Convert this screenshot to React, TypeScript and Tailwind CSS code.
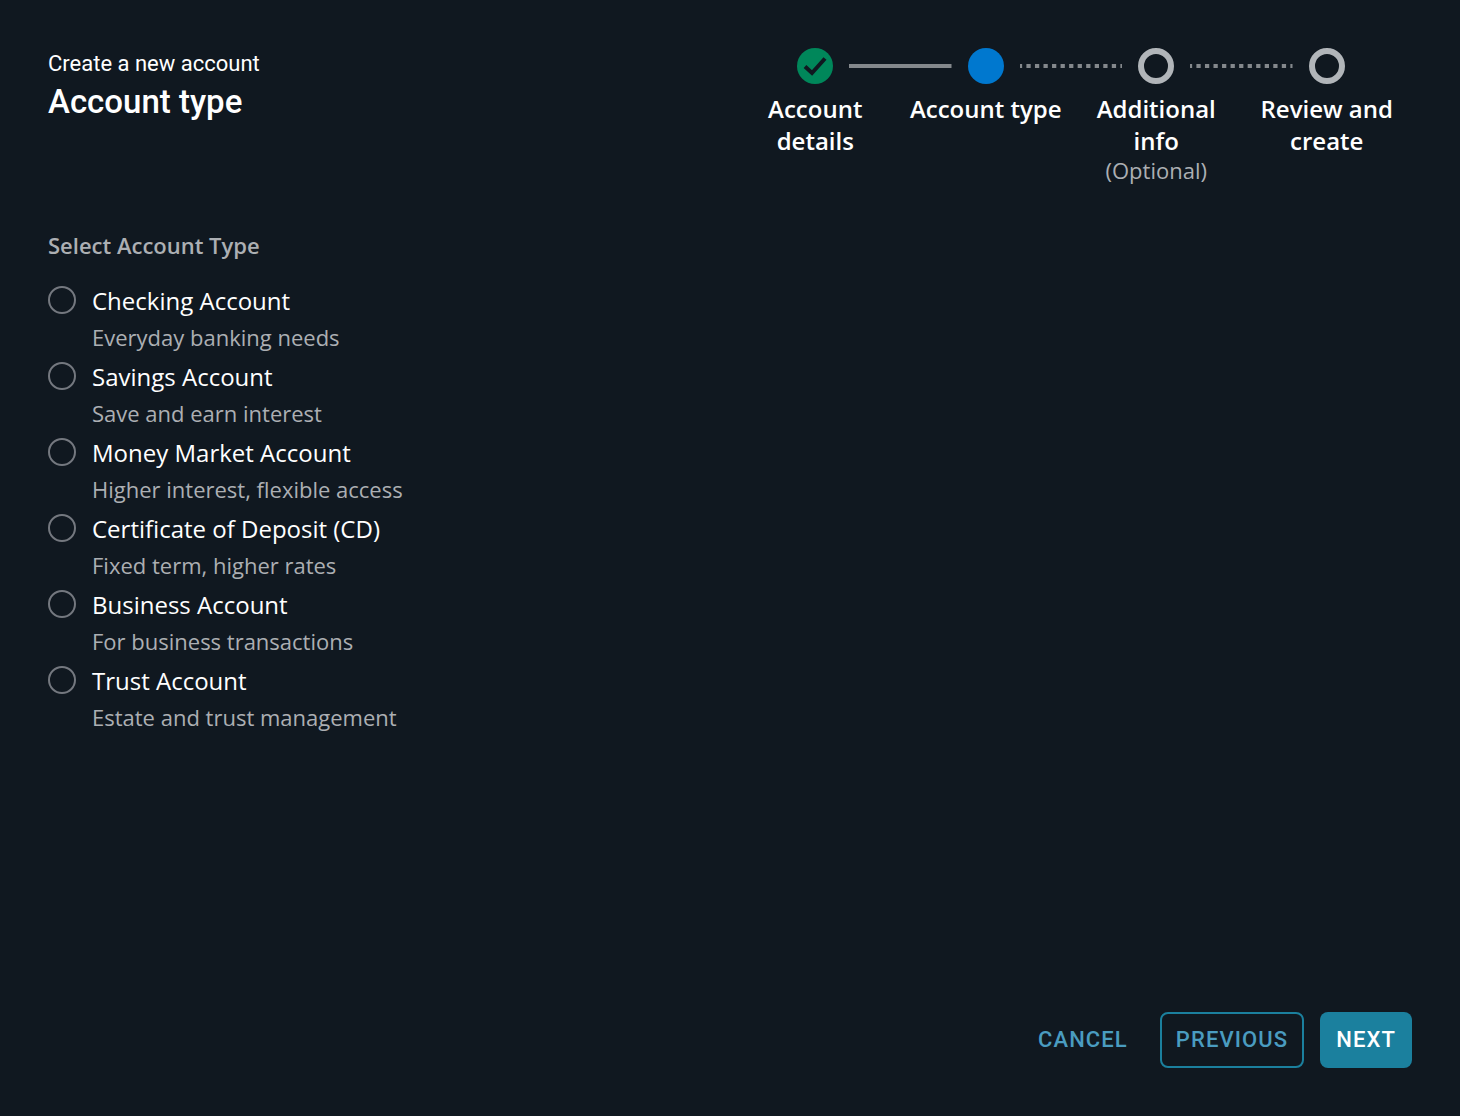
import { useState } from "react";

const steps = [
  { label: "Account details", state: "done" },
  { label: "Account type", state: "current" },
  { label: "Additional info", state: "todo", note: "(Optional)" },
  { label: "Review and create", state: "todo" },
];

const accounts = [
  ["checking", "Checking Account", "Everyday banking needs"],
  ["savings", "Savings Account", "Save and earn interest"],
  ["money-market", "Money Market Account", "Higher interest, flexible access"],
  ["cd", "Certificate of Deposit (CD)", "Fixed term, higher rates"],
  ["business", "Business Account", "For business transactions"],
  ["trust", "Trust Account", "Estate and trust management"],
];

function StepIcon({ state }: { state: string }) {
  return (
    <svg className="size-9 shrink-0" viewBox="0 0 36 36" aria-hidden="true">
      {state === "done" && (
        <>
          <circle cx="18" cy="18" r="18" fill="#00875a" />
          <path d="M8 18.5l7 6.5L28 10.5" fill="none" stroke="#101820" strokeWidth="4" />
        </>
      )}
      {state === "current" && <circle cx="18" cy="18" r="18" fill="#0078cf" />}
      {state === "todo" && (
        <circle cx="18" cy="18" r="15" fill="none" stroke="#b1b5b9" strokeWidth="6" />
      )}
    </svg>
  );
}

function Connector({ dotted }: { dotted: boolean }) {
  return (
    <svg className="mx-4 h-1 w-0 flex-1" aria-hidden="true">
      <line
        x1="0"
        y1="2"
        x2="100%"
        y2="2"
        stroke="#84888c"
        strokeWidth="4"
        strokeDasharray={dotted ? "4.27 4.27" : undefined}
        strokeDashoffset={dotted ? 2.13 : undefined}
      />
    </svg>
  );
}

function Stepper() {
  return (
    <nav aria-label="Progress">
      <div className="flex items-center px-[calc(12.5%-18px)]">
        {steps.map((step, i) => (
          <div key={step.label} className={i > 0 ? "flex flex-[1_1_36px] items-center" : "flex items-center"}>
            {i > 0 && <Connector dotted={step.state === "todo"} />}
            <StepIcon state={step.state} />
          </div>
        ))}
      </div>
      <ol className="mt-[9px] grid grid-cols-4 text-center">
        {steps.map((step) => (
          <li
            key={step.label}
            className="px-2"
            aria-current={step.state === "current" ? "step" : undefined}
          >
            <div className="text-2xl leading-8 font-semibold">{step.label}</div>
            {step.note && <div className="text-[22px] leading-[26px] text-[#acafb3]">{step.note}</div>}
          </li>
        ))}
      </ol>
    </nav>
  );
}

export default function App() {
  const [selected, setSelected] = useState("");
  return (
    <main className="flex min-h-screen flex-col bg-[#101820] p-12 font-['Open_Sans',sans-serif] text-white">
      <header className="grid grid-cols-2">
        <div className="font-[Roboto,sans-serif]">
          <p className="text-[22px] leading-8">Create a new account</p>
          <h1 className="text-[33px] leading-11 font-medium">Account type</h1>
        </div>
        <Stepper />
      </header>

      <fieldset className="mt-[46px]">
        <legend className="text-[22px] leading-8 font-semibold text-[#acafb3]">Select Account Type</legend>
        <div className="mt-5">
          {accounts.map(([id, name, description]) => (
            <div key={id} className="flex gap-4 pb-1">
              <input
                type="radio"
                id={id}
                name="account"
                checked={selected === id}
                onChange={() => setSelected(id)}
                aria-describedby={id + "-description"}
                className="mt-[5px] size-7 shrink-0 appearance-none rounded-full border-2 border-[#74787f] checked:border-8 checked:border-[#1b809e]"
              />
              <div>
                <label htmlFor={id} className="block text-2xl leading-10">
                  {name}
                </label>
                <p id={id + "-description"} className="text-[22px] leading-8 text-[#acafb3]">
                  {description}
                </p>
              </div>
            </div>
          ))}
        </div>
      </fieldset>

      <footer className="mt-auto flex justify-end gap-4 font-[Roboto,sans-serif] text-[22px] leading-7 font-medium tracking-wider">
        <button type="button" className="h-14 px-4 text-[#4a9cc0]">
          CANCEL
        </button>
        <button type="button" className="h-14 rounded-lg border-2 border-[#1b809e] px-3.5 text-[#4a9cc0]">
          PREVIOUS
        </button>
        <button type="button" className="h-14 rounded-lg bg-[#1b809e] px-4">
          NEXT
        </button>
      </footer>
    </main>
  );
}
